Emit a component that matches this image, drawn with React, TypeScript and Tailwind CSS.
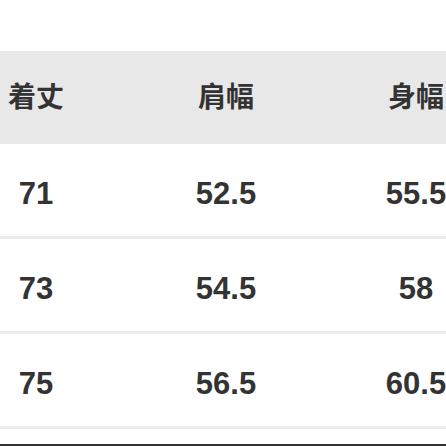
const headers = ["着丈", "肩幅", "身幅"];
const rows = [
  ["71", "52.5", "55.5"],
  ["73", "54.5", "58"],
  ["75", "56.5", "60.5"],
];

export default function App() {
  return (
    <main
      className="w-[446px] h-[446px] overflow-hidden bg-white flex flex-col text-[#333]"
      style={{ fontFamily: '"Liberation Sans", "Noto Sans CJK SC", sans-serif' }}
    >
      <div className="h-[51px] shrink-0" />
      <div className="w-[570px] -ml-[59px] shrink-0">
        <div className="grid grid-cols-3 h-[93px] bg-[#e8e8e8] items-center">
          {headers.map((h) => (
            <div key={h} className="text-center text-[28px] font-semibold leading-none">
              {h}
            </div>
          ))}
        </div>
        {rows.map((r) => (
          <div
            key={r[0]}
            className="grid grid-cols-3 h-[95px] items-center border-b-[3px] border-[#ececec] pt-[7px]"
          >
            {r.map((v, i) => (
              <div key={i} className="text-center text-[31px] font-bold leading-none">
                {v}
              </div>
            ))}
          </div>
        ))}
      </div>
      <div className="flex-1" />
      <div className="h-[2px] bg-[#333] shrink-0" />
    </main>
  );
}
